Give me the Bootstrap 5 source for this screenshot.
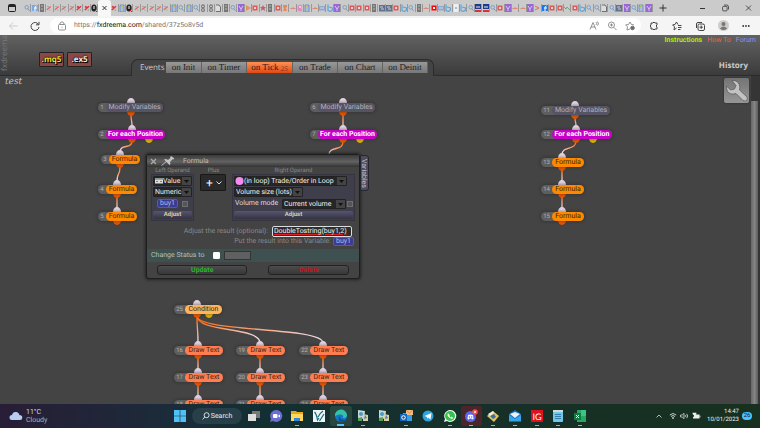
<!DOCTYPE html>
<html lang="en">
<head>
<meta charset="utf-8">
<meta name="viewport" content="width=device-width, initial-scale=1">
<title>fxDreema - test</title>
<link href="https://cdn.jsdelivr.net/npm/bootstrap@5.3.0/dist/css/bootstrap.min.css" rel="stylesheet">
<style>
body{font-family:Roboto,"Open Sans",sans-serif;font-size:7px;line-height:9px;background:#444;color:#ccc;text-rendering:geometricPrecision}
button,input,select{font:inherit;color:inherit;margin:0;text-rendering:inherit}
button{border:0;padding:0;background:none}
a{text-decoration:none}
svg{display:block;flex:none}
.ms-px{margin-left:1px}.ms-px3{margin-left:3px}
/* browser */
.strip{height:16px;background:#cbcbcb;color:#333}
.tabs{width:629px}
.tab-i{flex:1 1 0;min-width:0;border-right:1px solid #999;height:8px}
.tab-on{width:13px;background:#f7f7f7;border-radius:3px 3px 0 0}
.new-t{margin-left:5px}
.bar{height:19px;background:#f5f5f5;color:#444}
.addr{height:15px;border-radius:8px;background:#fff;color:#777;padding:0 6px 0 7px;margin:0 8px 0 10px}
.addr b{font-weight:400;color:#111}
.url{margin-left:7px;color:#777}
.tools{gap:13px;margin-right:10px}
.i3{width:10px;height:10px;fill:none;stroke:currentColor;stroke-width:1}
.off{color:#ccc}
/* app header */
.head{height:41px;background:linear-gradient(#626262,#3b3b3b);border-bottom:1px solid #2c2c2c}
.brand-v{writing-mode:vertical-rl;transform:rotate(180deg);font:8px/10px "Open Sans",sans-serif;color:#7a7a7a;width:10px}
.files{gap:3px;padding-top:17px;margin-left:29px}
.file{width:25px;height:15px;background:#8c4747;border:1px solid #222;border-radius:1px;font:700 8px/12px "Open Sans",sans-serif;color:#eee;text-shadow:0 0 1px #000,0 0 2px #000,1px 1px 0 #000}
.file.mq{color:#f0e22a}
.events{height:17px;margin:0 0 -1px 39px;background:#444;border:1px solid #2c2c2c;border-bottom:0;border-radius:7px 7px 0 0;padding:2px 5px 0 8px}
.ev-l{width:26px;font:8px/11px "Open Sans",sans-serif}
.ev{flex:none;height:11px;background:linear-gradient(#999,#777);border-right:1px solid #636363;color:#222;font:9px/11px "Liberation Serif",serif;width:45px}
.ev.act{background:linear-gradient(#ff9152,#e04a10);width:46px}
.ev.first{width:36px}
.ev sub{font-size:7px;font-style:italic;color:#733;bottom:-1px}
.links{gap:5px;padding-top:1px}
.l-ins{color:#b4f000;font-weight:600}.l-how{color:#f0603c}.l-for{color:#8f8fe8}
.hist{font:700 8px/10px "Open Sans",sans-serif;color:#ccc;padding-right:8px}
/* canvas */
.board{background:#444;min-height:0}
.ttl{font:italic 9px/12px "DejaVu Serif","Liberation Serif",serif;color:#c8c8c8;padding-left:5px}
.node{position:absolute;height:9px;border-radius:5px;background:#5e5e5e;box-shadow:0 0 3px 1px #2226;line-height:9px}
.node .no{width:8px;font-size:6px;text-align:center;flex:none;color:#b0b0b0}
.node .no.two{width:11px}
.node .lb{border-radius:5px;height:9px;color:#43260c;white-space:nowrap;text-align:center}
.node.k-mod .lb{background:#555364;color:#b0b0b6}
.node.k-for .lb{background:#c800c8;color:#fff;font-weight:700}
.k-fml .lb{background:#ff8800}
.k-cnd .lb{background:#ffb35c}
.k-txt .lb{background:#ff7d50}
.scroll-v{position:absolute;right:0;top:0;bottom:0;width:9px;background:#353535}
.thumb{margin-top:25px;width:7px;height:100%;background:linear-gradient(90deg,#666,#858585,#5c5c5c)}
.tool{position:absolute;right:11px;top:2px;width:25px;height:25px;border-radius:2px;background:linear-gradient(#747474,#969696);box-shadow:0 0 2px #222}
/* dialog */
.dlg{position:absolute;left:146px;top:78px;width:214px;background:#434343;border:1px solid #1e1e1e;border-radius:3px;box-shadow:0 0 3px 1px #222;color:#ddd}
.dlg-h{height:12px;background:linear-gradient(#3a3a3a,#626262 55%,#333);color:#bbb;padding-left:3px}
.lop{width:43px}
.mid{margin:0 5px 0 6px;width:27px}
.op-t{color:#888;font-size:6px;line-height:7px;text-align:center}
.op{background:#3f3e4b;border:1px solid #353440;padding:1px}
.oprow{height:13px}
.sel{appearance:none;display:block;height:10px;border:1px solid #222;border-radius:1px;background:#262626 url("data:image/svg+xml,%3Csvg xmlns='http://www.w3.org/2000/svg' width='9' height='10'%3E%3Cpath fill='%23444' d='M0 0h9v10H0z'/%3E%3Cpath fill='%23111' d='M2 4h5L4.500 7z'/%3E%3C/svg%3E") no-repeat right center;line-height:8px;padding:0 9px 0 1px;color:#eee;outline:0}
.sel.plus{height:17px;width:26px;background:#2a2a2a;border-color:#181818;font-size:12px;line-height:14px;padding:0 5px}
.sel.ico{padding-left:9px}
.s-ico{position:absolute;left:1px;top:0}
.chev{position:absolute;right:5px;top:7px;pointer-events:none}
.w0{margin-bottom:1px}
.w1{width:113px;margin-bottom:1px}.w2{width:69px}.w3{width:64px}.vl{width:48px;padding-left:1px}
.buy{background:#3c3c91;border:1px solid #5858a8;border-radius:2px;color:#b9b9e6;width:21px;height:9px;line-height:7px}
.cb{appearance:none;width:6px;height:6px;background:#555;border:1px solid #6e6e6e}
.cb.on{background:#fff;border-color:#fff;width:7px;height:7px;border-radius:1px}
.adj{height:8px;width:100%;background:linear-gradient(#565574,#34333f);border-radius:2px;color:#d5cfad;font-size:6px;font-weight:700;line-height:8px}
.fx{width:80px;height:11px;background:#2e2e2e;border:1px solid #ddd;border-radius:2px;color:#eee;padding:0 1px;text-decoration:underline #d22}
.dim{color:#888}
.fxr{padding:4px 7px 0 0;height:16px}.pvr{padding-right:5px;height:9px;margin-bottom:3px;gap:2px}
.stat{height:13px;background:#3f5050;color:#b0c0c0;padding-left:4px}
.stl{width:62px}
.stin{width:27px;height:9px;background:#606060;border:1px solid #333}
.bts{padding:3px 10px;gap:21px}.up{width:91px;color:#28b428}.del{width:81px;color:#c81414}
.act-b{height:10px;border:1px solid #222;border-radius:3px;background:linear-gradient(#4c4c4c,#383838);font-weight:700;line-height:8px}
.vtab{position:absolute;left:213px;top:0;width:9px;height:36px;writing-mode:vertical-rl;background:#4d4c5c;border:1px solid #262630;border-radius:0 3px 3px 0;color:#c5c5cf;line-height:8px;text-align:center}
/* taskbar */
.task{height:24px;background:linear-gradient(90deg,#281d36,#1b2b3a 22%,#122f32 35%,#16302a 60%,#17301f);color:#ddd;line-height:8px;display:grid;grid-template-columns:1fr 422px 1fr}
.st22{width:22px}
.srch{width:50px;height:16px;border-radius:8px;background:#263f48;margin:0 1px;color:#eee}
.app{flex:1 1 0;min-width:0;height:20px;border-radius:2px}
.app.run::after{content:"";width:4px;height:1px;background:#aaa}
.app.cur{background:#28453f}.app.cur::after{background:#5bc0eb;width:7px;height:2px}
.app.hot{background:#4b2529}
.tray{padding-right:8px;gap:3px}
.tm{font-size:6px;text-align:right;color:#eee;margin-left:3px}
.n26{width:10px;height:8px;border-radius:4px;background:#4cc2ff;color:#123;font-size:6px;line-height:8px}
</style>
<script src="https://cdn.jsdelivr.net/npm/bootstrap@5.3.0/dist/js/bootstrap.bundle.min.js"></script>
</head>
<body class="vh-100 d-flex flex-column overflow-hidden">
<div class="strip d-flex flex-shrink-0 align-items-center">
  <svg class="ms-2" width="8" height="8" viewBox="0 0 8 8"><rect x=".5" y=".5" width="7" height="7" rx="1" fill="none" stroke="#222"/><path d="M1 1h6v2H1z" fill="#222"/></svg>
  <div class="tabs ms-2 d-flex align-items-center" id="tabs"></div>
  <button aria-label="New tab" class="new-t"><svg class="i3" viewBox="0 0 10 10"><path d="M5 1.500v7M1.500 5h7"/></svg></button>
  <div class="d-flex ms-auto me-2 gap-3">
    <button aria-label="Minimise"><svg width="7" height="8" viewBox="0 0 7 8"><path d="M1 4.500h5" stroke="#333"/></svg></button>
    <button aria-label="Restore"><svg width="7" height="8" viewBox="0 0 7 8" fill="none" stroke="#333" stroke-width=".8"><rect x=".6" y="2.400" width="4.500" height="4.500" rx="1"/><path d="M2 1h2.500Q6.500 1 6.500 3v2.500"/></svg></button>
    <button aria-label="Close"><svg width="7" height="8" viewBox="0 0 7 8"><path d="M1 1.500l5 5M6 1.500l-5 5" stroke="#333" stroke-width=".8"/></svg></button>
  </div>
</div>
<nav class="bar d-flex flex-shrink-0 align-items-center">
  <button class="ms-2 off" aria-label="Back"><svg class="i3" viewBox="0 0 10 10"><path d="M9.500 5h-8M5 1.500L1.500 5 5 8.500"/></svg></button>
  <button class="ms-2 ps-1" aria-label="Reload"><svg class="i3" viewBox="0 0 10 10"><path d="M8.500 3.500A4 4 0 1 0 9 6M9 .8v3H6"/></svg></button>
  <div class="addr flex-grow-1 d-flex align-items-center">
    <svg class="i3" viewBox="0 0 10 10"><path d="M2.500 3.500h5q1 0 1 1V8q0 1-1 1h-5q-1 0-1-1V4.500q0-1 1-1M3 3.500V2q2-2.500 4 0v1.500M5 5.800v1" stroke-width=".8"/></svg>
    <a class="url flex-grow-1" href="#">https://<b>fxdreema.com</b>/shared/37z5o8v5d</a>
    <div class="d-flex gap-2">
      <svg class="i3" viewBox="0 0 10 10"><path d="M1 8.500L4 1.500l3 7M2 6h4M7 1q1.500 1.500 0 3M8.500 .5q2 2 0 4" stroke-width=".8"/></svg>
      <svg class="i3" viewBox="0 0 10 10"><circle cx="4.500" cy="4" r="3" stroke-width=".8"/><path d="M6.800 6.300L9.500 9M3 4h3M4.500 2.500v3" stroke-width=".8"/></svg>
      <svg class="i3" viewBox="0 0 10 10"><path d="M5 8L2 9l.5-3.200L.6 3.900l2.900-.4L5 1l1.400 2.500 2.600.4" stroke-width=".8"/><circle cx="7.500" cy="7" r="1.800" fill="#666"/></svg>
    </div>
  </div>
  <div class="tools d-flex align-items-center">
    <svg class="i3" viewBox="0 0 10 10"><path d="M2 2h2q1-2 2 0h2v2q-2 1 0 2v2H6q-1 2-2 0H2V6q-2-1 0-2z"/></svg>
    <svg class="i3" viewBox="0 0 10 10"><path d="M4.500 7L2 9l.5-3.200L.6 3.900l2.400-.4L4.500 1l1.400 2.500M6 4.500h3.500M6 6.500h3.500M6 8.500h2.500"/></svg>
    <svg class="i3" viewBox="0 0 10 10"><rect x="3" y="3" width="6.500" height="6.500" rx="1.500"/><path d="M6.200 4.500v3.400M4.500 6.200h3.400M1.500 7V3q0-1.500 1.500-1.500h4"/></svg>
    <svg width="11" height="11" viewBox="0 0 11 11"><circle cx="5.500" cy="5.500" r="5.500" fill="#cfcbc8"/><circle cx="5.500" cy="4" r="2" fill="#777"/><path d="M2 8.500q3.500-4 7 0-3.500 3-7 0" fill="#777"/></svg>
    <svg width="8" height="4" viewBox="0 0 8 4" fill="#333"><circle cx="1.200" cy="2" r=".9"/><circle cx="4" cy="2" r=".9"/><circle cx="6.800" cy="2" r=".9"/></svg>
  </div>
</nav>
<header class="head d-flex flex-shrink-0">
  <div class="brand-v text-end">fxdreema</div>
  <div class="files d-flex align-items-start"><button class="file mq">.mq5</button><button class="file">.ex5</button></div>
  <div class="events d-flex align-self-end z-1">
    <span class="ev-l">Events</span>
    <button class="ev first">on Init</button><button class="ev">on Timer</button><button class="ev act">on Tick <sub>25</sub></button><button class="ev">on Trade</button><button class="ev">on Chart</button><button class="ev">on Deinit</button>
  </div>
  <div class="ms-auto d-flex flex-column justify-content-between pe-1">
    <div class="links d-flex"><a href="#" class="l-ins">Instructions</a><a href="#" class="l-how">How To</a><a href="#" class="l-for">Forum</a></div>
    <div class="hist text-end pb-1">History</div>
  </div>
</header>
<main class="board position-relative flex-grow-1 overflow-hidden">
  <div class="ttl">test</div>
  <svg id="wires" class="position-absolute top-0 start-0 w-100 h-100" fill="none"></svg>
  <div id="nodes"></div>
  <section class="dlg">
    <div class="dlg-h d-flex align-items-center">
      <svg width="7" height="7" viewBox="0 0 7 7"><path d="M1 1l5 5M6 1L1 6" stroke="#aaa" stroke-width="1.300"/></svg>
      <svg class="ms-1" width="14" height="10" viewBox="0 0 14 10"><path d="M.5 9.500L6 5" stroke="#bbb"/><path d="M3 3.500l2-.5 2 1 2.500-2L9 .8 10.500 .3l2.700 2-.7 1.200-1-.3L9 6l.5 2-1 1z" fill="#c4c4c4"/></svg>
      <span class="ms-2">Formula</span>
    </div>
    <div class="d-flex px-1">
      <div class="lop"><div class="op-t">Left Operand</div>
        <div class="op">
          <div class="position-relative w0"><select class="sel ico w-100" aria-label="Operand"><option>Value</option></select><svg class="s-ico" width="9" height="10" viewBox="0 0 9 10"><path d="M1 2.500h8v5H1z" fill="#ddd"/><path d="M1 2.500h8V4H1z" fill="#8aa"/><path d="M2 5h2v1H2z" fill="#c55"/><path d="M6 5h2v1H6z" fill="#58b"/></svg></div>
          <select class="sel w-100" aria-label="Type"><option>Numeric</option></select>
          <div class="d-flex align-items-center justify-content-end oprow"><button class="buy">buy1</button><input class="cb mx-1" type="checkbox" aria-label="Use buy1"></div>
          <button class="adj">Adjust</button>
        </div></div>
      <div class="mid"><div class="op-t">Plus</div><div class="position-relative"><select class="sel plus" aria-label="Operator"><option>+</option></select><svg class="chev" width="6" height="4" viewBox="0 0 6 4"><path d="M.5 .5L3 3 5.500 .5" fill="none" stroke="#ddd"/></svg></div></div>
      <div class="flex-grow-1"><div class="op-t">Right Operand</div>
        <div class="op">
          <div class="position-relative w1"><select class="sel ico w-100" aria-label="Source"><option>(in loop) Trade/Order in Loop</option></select><svg class="s-ico" width="9" height="10" viewBox="0 0 9 10"><circle cx="4.500" cy="5" r="4" fill="#f68bf0"/></svg></div>
          <select class="sel w2" aria-label="Property"><option>Volume size (lots)</option></select>
          <div class="d-flex align-items-center oprow"><label for="vm" class="vl text-nowrap">Volume mode</label><select class="sel w3" id="vm"><option>Current volume</option></select><input class="cb ms-px" type="checkbox" aria-label="Use mode"></div>
          <button class="adj">Adjust</button>
        </div></div>
    </div>
    <div class="fxr d-flex justify-content-end align-items-center"><label for="fx" class="dim me-1">Adjust the result (optional):</label><input id="fx" class="fx" value="DoubleTostring(buy1,2)"></div>
    <div class="pvr d-flex justify-content-end align-items-center"><span class="dim">Put the result into this Variable:</span><button class="buy">buy1</button></div>
    <div class="stat d-flex align-items-center"><label for="st" class="stl">Change Status to</label><input id="st" type="checkbox" class="cb on"><input class="stin ms-1" aria-label="Status" disabled></div>
    <div class="bts d-flex"><button class="act-b up">Update</button><button class="act-b del">Delete</button></div>
    <button class="vtab">Variables</button>
  </section>
  <button class="tool" aria-label="Settings"><svg width="25" height="25" viewBox="0 0 25 25"><path d="M8 2.500l4 5-1.500 3.500-4 1L2.500 8C2 14 6 17.500 12 15.500l7 7q2.200 1.500 4-.5 1-2-.5-3.500L15.500 12C17 6.500 13.500 2 8 2.500z" fill="#c2c2c2" stroke="#555" stroke-width=".7"/></svg></button>
  <div class="scroll-v"><div class="thumb"></div></div>
</main>
<footer class="task flex-shrink-0 align-items-center">
  <div class="d-flex align-items-center ps-2"><svg width="15" height="12" viewBox="0 0 15 12"><path d="M4 10a2.500 2.500 0 0 1 0-5Q5 1.500 8 2q3 .3 3.300 3 3 0 3 2.500T12 10z" fill="#b8cdf2"/></svg><div class="ms-px3">11°C<br><span class="opacity-75">Cloudy</span></div></div>
  <div class="d-flex align-items-center" id="apps">
    <button class="d-flex justify-content-center st22" aria-label="Start"><svg width="12" height="12" viewBox="0 0 12 12" fill="#4fc3f7"><path d="M0 0h5.700v5.700H0zM6.300 0H12v5.700H6.300zM0 6.300h5.700V12H0zM6.300 6.300H12V12H6.300z"/></svg></button>
    <button class="srch d-flex align-items-center justify-content-center"><svg width="8" height="8" viewBox="0 0 8 8" fill="none" stroke="#eee" stroke-width=".9"><circle cx="4.600" cy="3.200" r="2.500"/><path d="M2.800 5L.6 7.400"/></svg><span class="ms-px">Search</span></button>
  </div>
  <div class="tray d-flex align-items-center justify-content-end">
    <svg class="ms-px" width="8" height="8" viewBox="0 0 8 8"><path d="M1.500 5.500L4 3l2.500 2.500" fill="none" stroke="#ddd" stroke-width=".8"/></svg>
    <svg class="ms-px3" width="8" height="8" viewBox="0 0 8 8" fill="none" stroke="#ddd" stroke-width=".9"><path d="M.8 3q3.200-3 6.400 0M2 4.500q2-2 4 0"/><circle cx="4" cy="6" r=".6"/></svg>
    <svg width="9" height="8" viewBox="0 0 9 8" fill="none" stroke="#ddd" stroke-width=".8"><path d="M.6 3h1.600L4 1.300v5.400L2.200 5H.6zM5.500 3q.8 1 0 2M6.700 1.800q2 2.200 0 4.400"/></svg>
    <svg width="9" height="8" viewBox="0 0 9 8"><path d="M2 2.500h5.500v4H1V5l1-.5z" fill="#eee"/><path d="M1 .8v1.500l1.500 1L4 2.300V.8M8 3.700v1.600" stroke="#eee" fill="#eee" stroke-width=".8"/></svg>
    <div class="tm">14:47<br>10/01/2023</div>
    <div class="n26 text-center">26</div>
  </div>
</footer>
<script>
// favicon shapes, one letter per kind
const fav={
 s:'<circle cx="2.700" cy="3.300" r="1.800" fill="none" stroke="#6c9dcc" stroke-width=".9"/><path d="M4 4.800l1.500 2" stroke="#6c9dcc"/>',
 f:'<path d="M0 1h6v6H0z" fill="#7fa8e0"/><path d="M4.500 2Q3 2 3 4v3M2 4h3" stroke="#fff" fill="none"/>',
 F:'<path d="M0 1h6v6H0z" fill="#1877f2"/><path d="M4.500 2Q3 2 3 4v3M2 4h3" stroke="#fff" fill="none"/>',
 g:'<path d="M1 0h4v8H1z" fill="#777"/><path d="M2 2h2M2 5h2" stroke="#bbb"/>',
 r:'<path d="M.8 5.800L4.800 2.500" stroke="#e06a6a" stroke-width="1.300"/><path d="M1 2.500h2M3 6h1.500" stroke="#a3aaa3"/>',
 R:'<path d="M.8 6L5 2.300M1 2.500l2 1" stroke="#dd3333" stroke-width="1.400"/><path d="M3.500 6h1.500" stroke="#889"/>',
 Q:'<ellipse cx="3" cy="4" rx="2.700" ry="3.500" fill="#222"/><path d="M3 2v3" stroke="#fff"/><path d="M4 6l2 2" stroke="#d22"/>',
 d:'<path d="M1 1h4v7H1z" fill="#a9bedb" stroke="#5c86c0" stroke-width=".8"/><path d="M2 1h2v2H2z" fill="#c9b850"/>',
 o:'<circle cx="3" cy="2.300" r="2" fill="#777"/><circle cx="3" cy="6" r="2" fill="#777"/><path d="M2 2.300h2M2 6h2" stroke="#ddd"/>',
 p:'<path d="M1 1h3l1.500 2v4.500H1" fill="#ddd" stroke="#555" stroke-width=".8"/>',
 u:'<path d="M0 0h6v8H0z" fill="#9a68d4"/><path d="M1 2l2 3 2-3M2 6h2" stroke="#e9dcfa" fill="none" stroke-width=".8"/>',
 y:'<path d="M1 1l5 3-5 3z" fill="#e3935f"/>',
 q:'<path d="M.5 1.500h5v5h-5z" fill="#dc5a5a"/><path d="M2 3h2v2H2z" fill="#f3d4d4"/>',
 X:'<path d="M.5 1.500h5v5h-5z" fill="#f00"/><path d="M2 3h2v2H2z" fill="#fff"/>',
 a:'<path d="M3 1l1 2h2L4.500 4.500 5 7 3 5.500 1 7l.5-2.500L0 3h2z" fill="#c0606a"/>',
 m:'<path d="M1 1h4v2l-1 1 1 3H1l1-3-1-1z" fill="#e08c60"/>',
 h:'<path d="M.5 4.500h5M3 3v2" stroke="#dd8a70"/>',
 k:'<path d="M.5 2Q3-1 5.500 2L4 4l1.500 2Q3 9 .5 6" fill="#e58ac0"/><path d="M2 3h2" stroke="#fff"/>',
 l:'<path d="M0 2h6v4.500H0z" fill="#8ea8cf"/><path d="M1 4h4" stroke="#cbd6e6"/>',
 b:'<path d="M1 .5v6l2.500 1 2-1.500V4L2 3" fill="none" stroke="#5aa6e0" stroke-width="1.200"/>',
 B:'<path d="M0 1h6v6.500H0z" fill="#62718c"/><path d="M1 3h3M2 5h3" stroke="#ccd"/>',
 w:'<path d="M.5 0h5v8h-5z" fill="#eee"/><path d="M2 4h2" stroke="#888"/>',
 n:'<path d="M0 0h6v5H0z" fill="#1c3c8c"/><path d="M0 6h6v2H0z" fill="#d33"/><path d="M1 3h4" stroke="#eee"/>',
 c:'<path d="M1 2l4 2-4 2" fill="none" stroke="#e07050"/>',
 z:'<path d="M0 3l2 2 1-2 3 3" fill="none" stroke="#6ba880"/>'};
const icon=k=>`<div class="tab-i d-flex justify-content-center"><svg width="6" height="8" viewBox="0 0 6 8">${fav[k]}</svg></div>`;
document.getElementById('tabs').innerHTML=[...'sfgrrrrRRQ'].map(icon).join('')+
 '<div class="tab-on d-flex align-self-stretch align-items-center justify-content-center"><svg width="5" height="16" viewBox="0 0 5 16"><path d="M.5 6l4 4M4.500 6l-4 4" stroke="#333"/></svg></div>'+
 [...'RdQrrrrrdsdsoopgsuyqagqmhkdhlbusqqqgBBqbsghXlbwbsnnsquhhucFqqzqbsspsBusdu'].map(icon).join('');

// blocks: id, kind, label, left, middle y, width, input x
const N=[[1,'mod','Modify Variables',98,31,65,131],[2,'for','For each Position',98,58,67,132],[3,'fml','Formula',101,83,39,120],[4,'fml','Formula',98,113,39,117],[5,'fml','Formula',98,140,39,117],
[6,'mod','Modify Variables',310,31,65,343],[7,'for','For each Position',310,58,67,343],
[11,'mod','Modify Variables',541,34,69,575],[12,'for','For each Position',541,58,71,576],[13,'fml','Formula',541,86,43,562],[14,'fml','Formula',541,113,43,562],[15,'fml','Formula',541,140,43,562],
[25,'cnd','Condition',174,233,48,197],[16,'txt','Draw Text',174,274,49,198],[17,'txt','Draw Text',174,301,49,198],[18,'txt','Draw Text',174,328,49,198],
[19,'txt','Draw Text',236,274,49,260],[20,'txt','Draw Text',236,301,49,260],[21,'txt','Draw Text',236,328,49,260],
[22,'txt','Draw Text',299,274,49,323],[23,'txt','Draw Text',299,301,49,323],[24,'txt','Draw Text',299,328,49,323]];
const L=[[1,2],[2,3],[3,4],[4,5],[6,7],[11,12],[12,13],[13,14],[14,15],[25,16],[25,19],[25,22],[16,17],[17,18],[19,20],[20,21],[22,23],[23,24]];
const at={};N.forEach(n=>at[n[0]]=n);
let s='',h='';
const wire=(x1,y1,x2,y2,i)=>{const m=(y1+y2)/2;
 s+=`<linearGradient id="g${i}" gradientUnits="userSpaceOnUse" x1="${x1}" y1="${y1}" x2="${x2}" y2="${y2}"><stop stop-color="#ff6a10"/><stop offset="1" stop-color="#eee0ee"/></linearGradient><path d="M${x1} ${y1}C${x1} ${m+3} ${x2} ${m-3} ${x2} ${y2}" stroke="url(#g${i})" stroke-width="1.300"/>`};
L.forEach(([a,b],i)=>wire(at[a][6],at[a][4]+7,at[b][6],at[b][4]-7,i));
wire(343,66,329,79,'v');
N.forEach(([id,k,t,x,y,w,p])=>{
 s+=`<path d="M${p-4} ${y-4}a4 5 0 0 1 8 0z" fill="#e2d3e2"/><path d="M${p-4} ${y+4}a4 5 0 0 0 8 0z" fill="#ee5500"/>`;
 if(k=='for'||k=='cnd'){const q=p+(k=='for'?17:12);s+=`<path d="M${q-4} ${y+4}a4 5 0 0 0 8 0z" fill="#e0b800"/>`}
 h+=`<div class="node k-${k} d-flex" style="left:${x}px;top:${y-4}px;width:${w}px"><span class="no ${id>9?'two':''}">${id}</span><span class="lb flex-grow-1">${t}</span></div>`});
document.getElementById('wires').innerHTML=s;
document.getElementById('nodes').innerHTML=h;

// taskbar applications: drawing on a 12 by 12 grid, state classes
const A=[
['Task view','<path d="M4 1h8v7H4z" fill="#777"/><path d="M0 4h8v7H0z" fill="#ddd"/>',''],
['Chat','<path d="M6 0a6 6 0 1 1-3 11L0 12l1-3A6 6 0 0 1 6 0z" fill="#6c6fd0"/><rect x="3" y="4" width="4.500" height="4" rx="1" fill="#fff"/><path d="M8 6l2-1.500v3z" fill="#fff"/>',''],
['Explorer','<path d="M0 1h5l1 1h6v9H0z" fill="#e8a919"/><path d="M0 4h12v7H0z" fill="#ffd75e"/><path d="M3 8h6v3H3z" fill="#2f86d8"/>','run'],
['Editor','<path d="M0 0h12v12H0z" fill="#eef4f4"/><path d="M1.500 2q2 2 3 8l1.500-2M5 7q2-4 5-6M6.500 11l4.500-7" stroke="#166a80" stroke-width="1.200" fill="none"/>',''],
['Edge','<circle cx="6" cy="6" r="6" fill="#1377c8"/><path d="M0 6a6 6 0 0 1 12-1q0 3.500-4 3 1-3-2-3.500T0 6z" fill="#35c1a8"/><path d="M5 6q-1 4 5.500 4Q8 12 5.500 11.800 2 10 5 6z" fill="#0b4d92"/>','run cur'],
['Terminal 1','<path d="M1 0l7 1-1 8-6-1z" fill="#c8d8d8"/><circle cx="4" cy="4" r="2" fill="#4a9ac8"/><path d="M6 4l5 1v6H6z" fill="#d8d0a0"/><path d="M8 5l2 3-3 1z" fill="#4a80c0"/><path d="M1 8l4-1v4H1z" fill="#55a055"/>','run'],
['Terminal 2','<path d="M1 0l7 1-1 8-6-1z" fill="#c8d8d8"/><circle cx="4" cy="4" r="2" fill="#4a9ac8"/><path d="M6 4l5 1v6H6z" fill="#d8d0a0"/><path d="M8 5l2 3-3 1z" fill="#4a80c0"/><path d="M1 8l4-1v4H1z" fill="#55a055"/>',''],
['Outlook','<path d="M3 3h9v8H3z" fill="#35a0e8"/><path d="M6 0h7v5H6z" fill="#f0bc84"/><path d="M6 0l3.500 3L13 0" stroke="#b57738" fill="none" stroke-width=".6"/><path d="M0 4h7v7H0z" fill="#1066b8"/><circle cx="3.500" cy="7.500" r="1.800" fill="none" stroke="#fff"/>','run'],
['Telegram','<circle cx="6" cy="6" r="5.500" fill="#2fa3dc"/><path d="M2.500 6l7-3-1 6.500-2.500-2L5 9V7z" fill="#fff"/>',''],
['WhatsApp','<path d="M6 0a6 6 0 1 1-3 11L0 12l1-3A6 6 0 0 1 6 0z" fill="#f2fff2"/><circle cx="6" cy="6" r="5" fill="#35c24c"/><path d="M4 3.500q-1 2 1.500 4t3.500.5l-1.500-1-1 .7L5 6l.5-1z" fill="#fff" stroke="#fff" stroke-width=".5"/>','run'],
['Discord','<circle cx="5.500" cy="6.500" r="5.500" fill="#5865f2"/><path d="M2.500 9l.5-4q2.500-1.200 5 0l.6 4-1.600.5-.5-1h-2l-.5 1z" fill="#fff"/><circle cx="4.400" cy="7" r=".7" fill="#5865f2"/><circle cx="6.700" cy="7" r=".7" fill="#5865f2"/><circle cx="10" cy="2" r="2.800" fill="#f05048"/><circle cx="10" cy="2" r="1" fill="#fff"/>','run hot'],
['MetaEditor','<path d="M0 6l6-5 6 5-5 6z" fill="#dcc464"/><path d="M3 6l4-2 2 3-3 2z" fill="#3d6ea8"/><path d="M1 4l5-3 1 2-4 3z" fill="#eee"/>','run'],
['Mail','<path d="M0 4l6-4 6 4v7H0z" fill="#1673c8"/><path d="M1 4l5-2 5 2-5 4z" fill="#f0f0f0"/><path d="M0 5l6 4 6-4v6.500H0z" fill="#35a6ee"/>','run'],
['IG','<path d="M0 0h12v12H0z" fill="#e0101c"/><text x="6" y="9.500" font-size="9" font-family="Lato" text-anchor="middle" fill="#fff">IG</text>','run'],
['Notepad','<rect x="1" width="10" height="12" rx="1" fill="#6cc8ee"/><path d="M1 1h10" stroke="#d8d8d8" stroke-width="2"/><path d="M3 4.500h6M3 6.500h6M3 8.500h6" stroke="#2a6a90" stroke-width=".8"/>','run'],
['Excel','<path d="M3 0h9v12H3z" fill="#29a565"/><path d="M7 0h5v6H7z" fill="#3cc481"/><path d="M0 3h7v7H0z" fill="#107c41"/><path d="M2 5l3 3M5 5L2 8" stroke="#fff"/>','run']];
document.getElementById('apps').insertAdjacentHTML('beforeend',A.map(([n,d,c])=>`<button class="app ${c} d-flex flex-column align-items-center justify-content-between pt-1" aria-label="${n}"><svg width="12" height="12" viewBox="0 0 12 12" overflow="visible">${d}</svg></button>`).join(''));
</script>
</body>
</html>
